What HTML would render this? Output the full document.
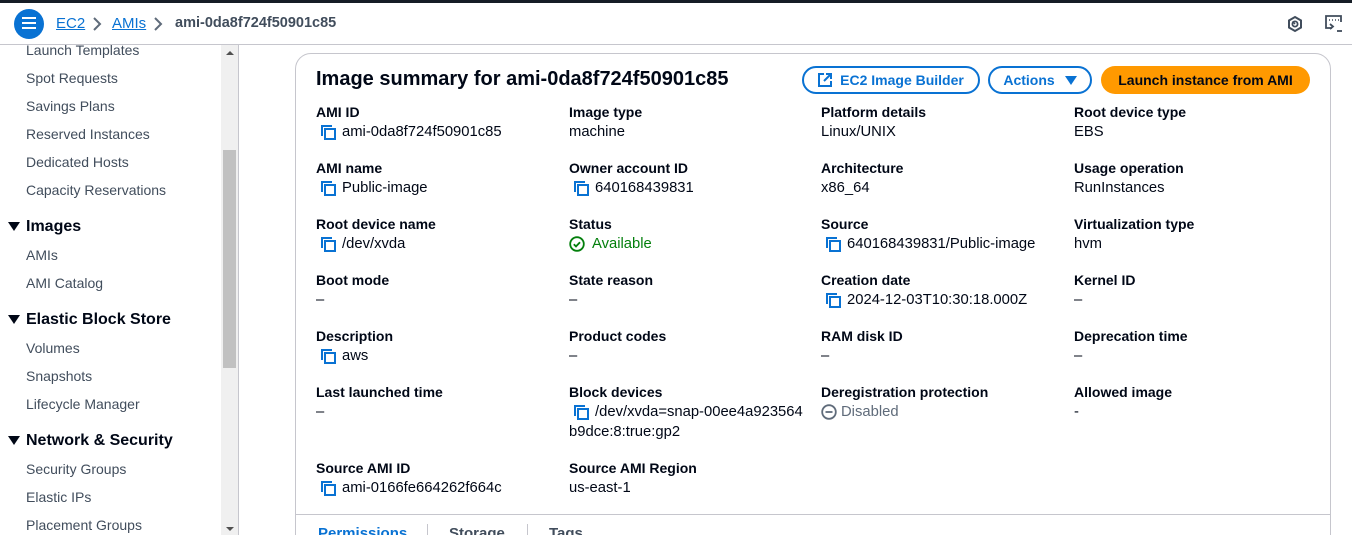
<!DOCTYPE html>
<html style="width:1352px;height:535px;overflow:hidden"><head><meta charset="utf-8"><style>
*{margin:0;padding:0;box-sizing:border-box}
body{width:1352px;height:535px;overflow:hidden;background:#fff;font-family:"Liberation Sans",sans-serif;color:#000716;position:relative}
.a{position:absolute;white-space:nowrap}
.top{position:absolute;left:0;top:0;width:1352px;height:3px;background:#161d26}
.hdr{position:absolute;left:0;top:3px;width:1352px;height:42px;border-bottom:1px solid #c6c6cd;background:#fff}
.side{font-size:14px;color:#414d5c}
.sh{font-size:16px;font-weight:bold;color:#000716}
.tri{position:absolute;width:0;height:0;border-left:6px solid transparent;border-right:6px solid transparent;border-top:9px solid #000716}
.lbl{font-size:14px;font-weight:bold;color:#000716}
.val{font-size:14.8px;color:#000716}
.cp{position:absolute;width:16px;height:16px}
.btn{position:absolute;height:28px;border-radius:16px;font-size:14px;font-weight:bold;display:flex;align-items:center;justify-content:center}
</style></head><body>
<div class="top"></div>
<div class="hdr"></div>
<div class="a" style="left:14px;top:9px;width:30px;height:30px;border-radius:50%;background:#0972d3"></div>
<div class="a" style="left:22px;top:17px;width:14px;height:2px;background:#fff;box-shadow:0 5px 0 #fff,0 10px 0 #fff"></div>
<div class="a" style="left:56px;top:15px;font-size:15px;color:#0972d3;text-decoration:underline">EC2</div>
<svg class="a" style="left:92px;top:17px" width="10" height="14" viewBox="0 0 10 14"><path d="M2 1l6 6-6 6" fill="none" stroke="#5f6b7a" stroke-width="2"/></svg>
<div class="a" style="left:112px;top:15px;font-size:15px;color:#0972d3;text-decoration:underline">AMIs</div>
<svg class="a" style="left:153px;top:17px" width="10" height="14" viewBox="0 0 10 14"><path d="M2 1l6 6-6 6" fill="none" stroke="#5f6b7a" stroke-width="2"/></svg>
<div class="a" style="left:175px;top:15px;font-size:14.5px;color:#414d5c;font-weight:bold">ami-0da8f724f50901c85</div>
<svg class="a" style="left:1286px;top:15px" width="18" height="18" viewBox="0 0 18 18"><path d="M9 2L15 5.5V12.5L9 16L3 12.5V5.5Z" fill="none" stroke="#414d5c" stroke-width="2"/><circle cx="9" cy="9" r="2.6" fill="none" stroke="#414d5c" stroke-width="1.8"/><path d="M9 9L6.5 6.5" stroke="#414d5c" stroke-width="1.5"/></svg>
<svg class="a" style="left:1324px;top:14px" width="20" height="20" viewBox="0 0 20 20"><path d="M8 14H2V2H17V8" fill="none" stroke="#414d5c" stroke-width="1.8"/><path d="M5 6h1M8 6h1M11 6h1M14 6h1" stroke="#414d5c" stroke-width="1.5"/><path d="M6 10l3 2.5-3 2.5" fill="none" stroke="#414d5c" stroke-width="1.8"/><path d="M13 17h5" stroke="#414d5c" stroke-width="1.8"/></svg>

<div class="a side" style="left:26px;top:42px">Launch Templates</div>
<div class="a side" style="left:26px;top:70px">Spot Requests</div>
<div class="a side" style="left:26px;top:98px">Savings Plans</div>
<div class="a side" style="left:26px;top:126px">Reserved Instances</div>
<div class="a side" style="left:26px;top:154px">Dedicated Hosts</div>
<div class="a side" style="left:26px;top:182px">Capacity Reservations</div>
<div class="tri" style="left:8px;top:222px"></div><div class="a sh" style="left:26px;top:218px">Images</div>
<div class="a side" style="left:26px;top:247px">AMIs</div>
<div class="a side" style="left:26px;top:275px">AMI Catalog</div>
<div class="tri" style="left:8px;top:315px"></div><div class="a sh" style="left:26px;top:311px">Elastic Block Store</div>
<div class="a side" style="left:26px;top:340px">Volumes</div>
<div class="a side" style="left:26px;top:368px">Snapshots</div>
<div class="a side" style="left:26px;top:396px">Lifecycle Manager</div>
<div class="tri" style="left:8px;top:436px"></div><div class="a sh" style="left:26px;top:432px">Network &amp; Security</div>
<div class="a side" style="left:26px;top:461px">Security Groups</div>
<div class="a side" style="left:26px;top:489px">Elastic IPs</div>
<div class="a side" style="left:26px;top:517px">Placement Groups</div>
<div class="a" style="left:221px;top:45px;width:17px;height:490px;background:#f0f0f0"></div>
<div class="a" style="left:223px;top:150px;width:13px;height:218px;background:#c1c1c1"></div>
<div class="a" style="left:226px;top:51px;border-left:4px solid transparent;border-right:4px solid transparent;border-bottom:4px solid #505050"></div>
<div class="a" style="left:226px;top:527px;border-left:4px solid transparent;border-right:4px solid transparent;border-top:4px solid #505050"></div>
<div class="a" style="left:238px;top:45px;width:1px;height:490px;background:#c6c6cd"></div>

<div class="a" style="left:295px;top:53px;width:1036px;height:500px;border:1px solid #c6c6cd;border-radius:16px"></div>
<div class="a" style="left:296px;top:514px;width:1034px;height:1px;background:#c6c6cd"></div>
<div class="a" style="left:316px;top:68px;font-size:20px;font-weight:bold">Image summary for ami-0da8f724f50901c85</div>
<div class="btn" style="left:802px;top:66px;width:178px;border:2px solid #0972d3;color:#0972d3"><svg width="14" height="14" viewBox="0 0 14 14" style="margin-right:8px"><path d="M6 1H1V13H13V8" fill="none" stroke="#0972d3" stroke-width="2"/><path d="M8 1H13V6M13 1L6 8" fill="none" stroke="#0972d3" stroke-width="2"/></svg>EC2 Image Builder</div>
<div class="btn" style="left:988px;top:66px;width:104px;border:2px solid #0972d3;color:#0972d3">Actions<span style="margin-left:10px;border-left:6px solid transparent;border-right:6px solid transparent;border-top:9px solid #0972d3"></span></div>
<div class="btn" style="left:1101px;top:66px;width:209px;background:#ff9900;color:#000716">Launch instance from AMI</div>

<svg width="0" height="0" style="position:absolute"><defs><symbol id="c" viewBox="0 0 16 16"><path d="M2 12V2h10" fill="none" stroke="#0972d3" stroke-width="2"/><rect x="5" y="5" width="10" height="10" fill="none" stroke="#0972d3" stroke-width="2"/></symbol></defs></svg>

<div class="a lbl" style="left:316px;top:104px">AMI ID</div>
<svg class="cp" style="left:320px;top:124px"><use href="#c"/></svg><div class="a val" style="left:342px;top:124px">ami-0da8f724f50901c85</div>
<div class="a lbl" style="left:569px;top:104px">Image type</div><div class="a val" style="left:569px;top:124px">machine</div>
<div class="a lbl" style="left:821px;top:104px">Platform details</div><div class="a val" style="left:821px;top:124px">Linux/UNIX</div>
<div class="a lbl" style="left:1074px;top:104px">Root device type</div><div class="a val" style="left:1074px;top:124px">EBS</div>

<div class="a lbl" style="left:316px;top:160px">AMI name</div>
<svg class="cp" style="left:320px;top:180px"><use href="#c"/></svg><div class="a val" style="left:342px;top:180px">Public-image</div>
<div class="a lbl" style="left:569px;top:160px">Owner account ID</div>
<svg class="cp" style="left:573px;top:180px"><use href="#c"/></svg><div class="a val" style="left:595px;top:180px">640168439831</div>
<div class="a lbl" style="left:821px;top:160px">Architecture</div><div class="a val" style="left:821px;top:180px">x86_64</div>
<div class="a lbl" style="left:1074px;top:160px">Usage operation</div><div class="a val" style="left:1074px;top:180px">RunInstances</div>

<div class="a lbl" style="left:316px;top:216px">Root device name</div>
<svg class="cp" style="left:320px;top:236px"><use href="#c"/></svg><div class="a val" style="left:342px;top:236px">/dev/xvda</div>
<div class="a lbl" style="left:569px;top:216px">Status</div>
<svg class="a" style="left:569px;top:236px" width="16" height="16" viewBox="0 0 16 16"><circle cx="8" cy="8" r="6.8" fill="none" stroke="#037f0c" stroke-width="1.8"/><path d="M4.8 8.2l2.2 2.2 4-4.2" fill="none" stroke="#037f0c" stroke-width="1.8"/></svg>
<div class="a val" style="left:592px;top:236px;color:#037f0c">Available</div>
<div class="a lbl" style="left:821px;top:216px">Source</div>
<svg class="cp" style="left:825px;top:236px"><use href="#c"/></svg><div class="a val" style="left:847px;top:236px">640168439831/Public-image</div>
<div class="a lbl" style="left:1074px;top:216px">Virtualization type</div><div class="a val" style="left:1074px;top:236px">hvm</div>

<div class="a lbl" style="left:316px;top:272px">Boot mode</div><div class="a val" style="left:316px;top:292px">–</div>
<div class="a lbl" style="left:569px;top:272px">State reason</div><div class="a val" style="left:569px;top:292px">–</div>
<div class="a lbl" style="left:821px;top:272px">Creation date</div>
<svg class="cp" style="left:825px;top:292px"><use href="#c"/></svg><div class="a val" style="left:847px;top:292px">2024-12-03T10:30:18.000Z</div>
<div class="a lbl" style="left:1074px;top:272px">Kernel ID</div><div class="a val" style="left:1074px;top:292px">–</div>

<div class="a lbl" style="left:316px;top:328px">Description</div>
<svg class="cp" style="left:320px;top:348px"><use href="#c"/></svg><div class="a val" style="left:342px;top:348px">aws</div>
<div class="a lbl" style="left:569px;top:328px">Product codes</div><div class="a val" style="left:569px;top:348px">–</div>
<div class="a lbl" style="left:821px;top:328px">RAM disk ID</div><div class="a val" style="left:821px;top:348px">–</div>
<div class="a lbl" style="left:1074px;top:328px">Deprecation time</div><div class="a val" style="left:1074px;top:348px">–</div>

<div class="a lbl" style="left:316px;top:384px">Last launched time</div><div class="a val" style="left:316px;top:404px">–</div>
<div class="a lbl" style="left:569px;top:384px">Block devices</div>
<svg class="cp" style="left:573px;top:404px"><use href="#c"/></svg><div class="a val" style="left:595px;top:404px">/dev/xvda=snap-00ee4a923564</div>
<div class="a val" style="left:569px;top:424px">b9dce:8:true:gp2</div>
<div class="a lbl" style="left:821px;top:384px">Deregistration protection</div>
<svg class="a" style="left:821px;top:404px" width="16" height="16" viewBox="0 0 16 16"><circle cx="8" cy="8" r="6.8" fill="none" stroke="#5f6b7a" stroke-width="1.8"/><path d="M4.5 8h7" stroke="#5f6b7a" stroke-width="1.8"/></svg>
<div class="a val" style="left:841px;top:404px;color:#5f6b7a">Disabled</div>
<div class="a lbl" style="left:1074px;top:384px">Allowed image</div><div class="a val" style="left:1074px;top:404px">-</div>

<div class="a lbl" style="left:316px;top:460px">Source AMI ID</div>
<svg class="cp" style="left:320px;top:480px"><use href="#c"/></svg><div class="a val" style="left:342px;top:480px">ami-0166fe664262f664c</div>
<div class="a lbl" style="left:569px;top:460px">Source AMI Region</div><div class="a val" style="left:569px;top:480px">us-east-1</div>

<div class="a" style="left:318px;top:525px;font-size:15px;font-weight:bold;color:#0972d3">Permissions</div>
<div class="a" style="left:427px;top:524px;width:1px;height:14px;background:#c6c6cd"></div>
<div class="a" style="left:449px;top:525px;font-size:15px;font-weight:bold;color:#414d5c">Storage</div>
<div class="a" style="left:527px;top:524px;width:1px;height:14px;background:#c6c6cd"></div>
<div class="a" style="left:549px;top:525px;font-size:15px;font-weight:bold;color:#414d5c">Tags</div>
</body></html>
